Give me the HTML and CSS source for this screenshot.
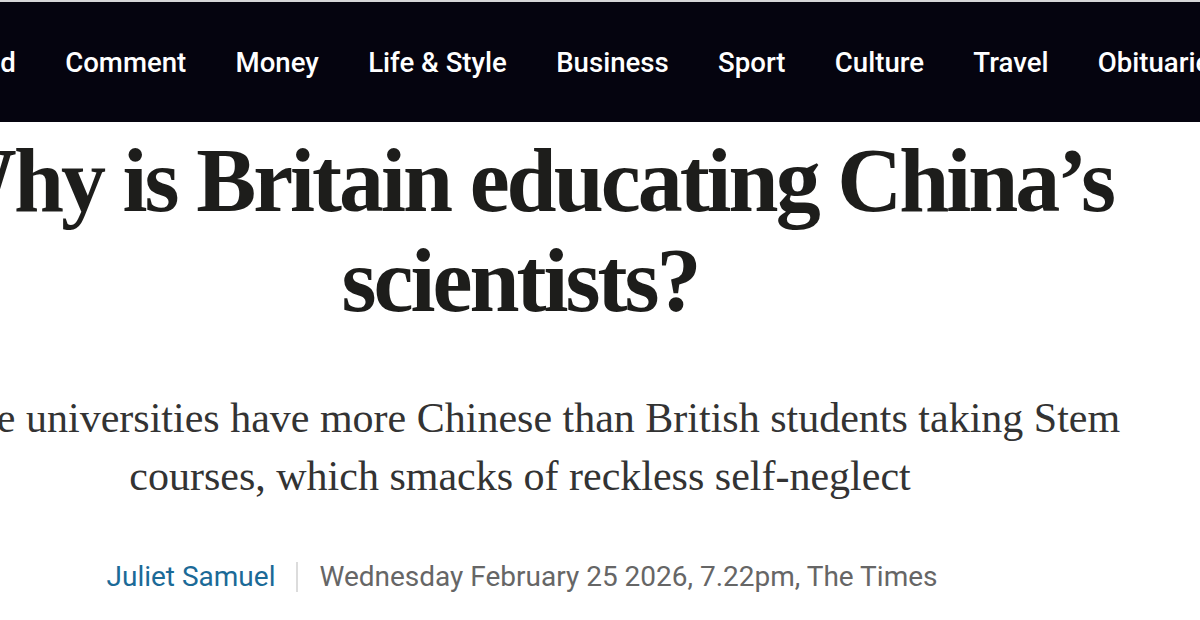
FILE: index.html
```html
<!DOCTYPE html>
<html>
<head>
<meta charset="utf-8">
<link rel="stylesheet" href="styles.css">
</head>
<body>
<nav class="nav">
  <ul class="nav-list">
    <li>World</li>
    <li>Comment</li>
    <li>Money</li>
    <li>Life &amp; Style</li>
    <li>Business</li>
    <li>Sport</li>
    <li>Culture</li>
    <li>Travel</li>
    <li>Obituaries</li>
  </ul>
</nav>
<header class="article-head">
  <h1 class="headline">Why is Britain educating China’s scientists?</h1>
  <p class="standfirst">Some universities have more Chinese than British students taking Stem courses, which smacks of reckless self-neglect</p>
  <div class="byline">
    <span class="author">Juliet Samuel</span>
    <span class="sep"></span>
    <span class="date">Wednesday February 25 2026, 7.22pm, The Times</span>
  </div>
</header>
</body>
</html>
```

FILE: styles.css
```css
html, body {
  margin: 0;
  padding: 0;
  background: #ffffff;
  overflow: hidden;
  width: 1200px;
  height: 620px;
}
.nav {
  border-top: 2px solid #d6d6d8;
  background: #05040f;
  height: 120px;
  display: flex;
  align-items: center;
  overflow: hidden;
}
.nav-list {
  list-style: none;
  margin: 0 0 0 -56px;
  padding: 0;
  display: flex;
  gap: 49.3px;
  white-space: nowrap;
  font-family: Roboto, "Liberation Sans", sans-serif;
  font-weight: 500;
  font-size: 27.6px;
  color: #ffffff;
}
.article-head {
  width: 1400px;
  margin-left: -180px;
  text-align: center;
}
.headline {
  margin: 9px auto 0;
  width: 1280px;
  font-family: "Liberation Serif", serif;
  font-weight: 700;
  font-size: 90px;
  line-height: 100px;
  color: #1d1d1b;
  letter-spacing: -3px;
}
.standfirst {
  margin: 58px auto 0;
  width: 1250px;
  font-family: "Liberation Serif", serif;
  font-size: 42px;
  line-height: 58px;
  color: #333333;
}
.byline {
  margin-top: 55px;
  padding-left: 4px;
  display: flex;
  justify-content: center;
  align-items: center;
  gap: 21px;
  font-family: Roboto, "Liberation Sans", sans-serif;
  font-size: 28px;
}
.author { color: #1b6a97; }
.sep {
  width: 2px;
  height: 30px;
  background: #dcdcdc;
}
.date { color: #666666; }
```
